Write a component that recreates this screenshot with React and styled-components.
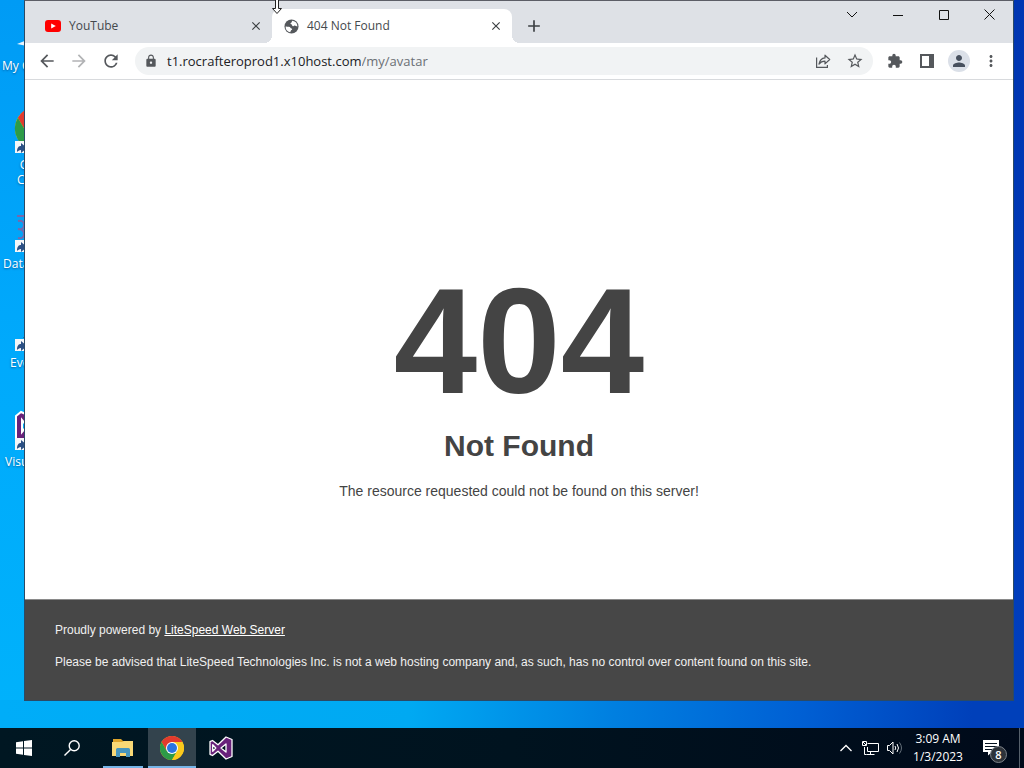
import React from "react";
import styled, { createGlobalStyle } from "styled-components";
import {
  MdAdd,
  MdArrowBack,
  MdArrowForward,
  MdClose,
  MdExtension,
  MdLock,
  MdMoreVert,
  MdPerson,
  MdRefresh,
  MdStarBorder,
} from "react-icons/md";

const uiFont = '"Open Sans", "Noto Sans", sans-serif';
const pageFont = '"Liberation Sans", Arial, sans-serif';

const GlobalStyle = createGlobalStyle`
  *, *::before, *::after { box-sizing: border-box; }
  body { margin: 0; font-family: ${uiFont}; font-size: 12px; }
  button { border: 0; padding: 0; background: none; font: inherit; color: inherit; }
  svg { display: block; flex: none; }
`;

const Screen = styled.div`
  display: flex;
  flex-direction: column;
  min-height: 100vh;
`;

const Desktop = styled.main`
  position: relative;
  display: flex;
  flex: 1;
  background:
    linear-gradient(90deg, #00adf8 0%, #00a9f2 40%, #007fe0 60%, #0060d4 78%, #0040ba 95%) bottom / 100% 28px no-repeat,
    linear-gradient(180deg, #009bf5 0%, #00aafc 50%, #00b2fb 100%) left / 50% 100% no-repeat,
    linear-gradient(180deg, #0036b2 0%, #003fbe 100%);
`;

/* Desktop shortcuts */
const Shortcuts = styled.nav`
  display: flex;
  flex-direction: column;
  width: 74px;
  margin-top: 6px;
`;

const Shortcut = styled.a`
  display: flex;
  flex-direction: column;
  align-items: center;
  height: 99px;
  color: #fff;
  font-size: 12px;
  line-height: 15px;
  text-decoration: none;
  text-shadow: 0 1px 2px rgba(0, 30, 80, 0.5);
`;

const ShortcutIcon = styled.svg`
  width: 48px;
  height: 48px;
  margin-bottom: 4px;
`;

const ShortcutLabel = styled.span`
  align-self: flex-start;
  margin-left: ${(p) => p.$inset}px;
  text-align: center;
  white-space: pre;
`;

/* Browser window */
const BrowserWindow = styled.section`
  position: absolute;
  top: 0;
  right: 10px;
  bottom: 27px;
  left: 24px;
  display: flex;
  flex-direction: column;
  border: 1px solid #2b4a66;
  border-top-color: #5c5e66;
  background: #fff;
`;

const TabStrip = styled.header`
  display: flex;
  height: 42px;
  background: #dee1e6;
  color: #45494d;
`;

const Tab = styled.div`
  position: relative;
  display: flex;
  align-items: center;
  width: ${(p) => (p.$active ? "240px" : "247px")};
  height: 34px;
  margin-top: 8px;
  padding: 0 8px 0 ${(p) => (p.$active ? "12px" : "20px")};
  border-radius: 8px 8px 0 0;
  background: ${(p) => (p.$active ? "#fff" : "transparent")};

  &::before,
  &::after {
    content: "";
    display: ${(p) => (p.$active ? "block" : "none")};
    position: absolute;
    bottom: 0;
    width: 8px;
    height: 8px;
  }
  &::before {
    left: -8px;
    background: radial-gradient(circle at 0 0, transparent 8px, #fff 8px);
  }
  &::after {
    right: -8px;
    background: radial-gradient(circle at 100% 0, transparent 8px, #fff 8px);
  }
`;

const TabTitle = styled.span`
  flex: 1;
  margin-left: 8px;
  line-height: 16px;
`;

const TabButton = styled.button`
  display: grid;
  place-items: center;
  width: 16px;
  height: 16px;
  color: #3c4043;
`;

const NewTab = styled(TabButton)`
  width: 28px;
  height: 28px;
  margin: 11px 0 0 8px;
`;

const WindowControls = styled.div`
  display: flex;
  margin-left: auto;
`;

const ControlButton = styled.button`
  display: grid;
  place-items: center;
  width: 46px;
  height: 28px;
  color: #111;
`;

const Toolbar = styled.div`
  display: flex;
  align-items: center;
  height: 37px;
  padding: 0 6px;
  border-bottom: 1px solid #d8dadd;
  background: #fff;
  color: #55585c;
`;

const ToolButton = styled.button`
  display: grid;
  place-items: center;
  width: 32px;
  height: 32px;
  opacity: ${(p) => (p.disabled ? 0.45 : 1)};
`;

const AddressBar = styled.form`
  display: flex;
  align-items: center;
  flex: 1;
  height: 28px;
  margin: 0 6px 0 8px;
  padding: 0 2px 0 9px;
  border-radius: 14px;
  background: #f1f3f4;
  font-size: 13px;
  line-height: 20px;
`;

const Host = styled.label`
  margin-left: 9px;
  color: #202124;
`;

const PathInput = styled.input`
  flex: 1;
  min-width: 0;
  padding: 0;
  border: 0;
  outline: 0;
  background: none;
  color: #6b6f74;
  font: inherit;
`;

const Avatar = styled.span`
  display: grid;
  place-items: center;
  width: 22px;
  height: 22px;
  border-radius: 50%;
  background: #dbe0e8;
  color: #47505e;
`;

/* Web page */
const Page = styled.article`
  display: flex;
  flex: 1;
  flex-direction: column;
  align-items: center;
  justify-content: center;
  padding-top: 87px;
  color: #444;
  font-family: ${pageFont};
  font-size: 14px;
  line-height: 20px;
`;

const Code = styled.h1`
  margin: 0;
  font-size: 150px;
  line-height: 150px;
`;

const Reason = styled.h2`
  margin: 20px 0 25px;
  font-size: 30px;
  line-height: 20px;
`;

const Message = styled.p`
  margin: 0;
`;

const PageFooter = styled.footer`
  display: flex;
  flex-direction: column;
  gap: 12px;
  height: 101px;
  padding: 20px 30px;
  border-top: 1px solid #8a8a8a;
  background: #474747;
  color: #f0f0f0;
  font-family: ${pageFont};
  font-size: 12px;
  line-height: 20px;
`;

const FooterLink = styled.a`
  color: #fff;
`;

const Cursor = styled.svg`
  position: absolute;
  top: 0;
  left: 270px;
`;

/* Taskbar */
const Taskbar = styled.footer`
  display: flex;
  height: 40px;
  background: linear-gradient(90deg, #001722, #00131f 50%, #000a1a);
  color: #fff;
`;

const TaskButton = styled.button`
  display: grid;
  place-items: center;
  width: 48px;
  height: 40px;
  margin-right: ${(p) => (p.$app ? "1px" : "0")};
  background: ${(p) => (p.$current ? "#33434d" : "transparent")};
  background-image: ${(p) => (p.$running ? "linear-gradient(#76b5e8, #76b5e8)" : "none")};
  background-position: bottom;
  background-repeat: no-repeat;
  background-size: ${(p) => (p.$current ? "48px" : "40px")} 2px;
`;

const Apps = styled.div`
  display: flex;
  margin-left: 3px;
`;

const Tray = styled.div`
  display: flex;
  align-items: center;
  margin-left: auto;
  padding-right: 4px;
`;

const TrayButton = styled.button`
  display: grid;
  place-items: center;
  width: 24px;
  height: 40px;
`;

const Clock = styled.time`
  width: 64px;
  line-height: 18px;
  text-align: center;
`;

const Notifications = styled.button`
  position: relative;
  display: grid;
  place-items: center;
  width: 50px;
  height: 40px;
  padding-right: 8px;
  border-right: 1px solid #56606b;
`;

const Count = styled.span`
  position: absolute;
  right: 12px;
  bottom: 5px;
  width: 17px;
  height: 17px;
  border: 1px solid #7d838a;
  border-radius: 50%;
  background: #2d333a;
  font-size: 11px;
  font-weight: 600;
  line-height: 15px;
  text-align: center;
`;

const ChromeMark = () => (
  <g>
    <circle cx="12" cy="12" r="12" fill="#fbc91d" />
    <path d="M12 6h10.400A12 12 0 0 0 1.600 6l5.200 9Z" fill="#e23a2e" />
    <path d="M1.600 6A12 12 0 0 0 12 24l5.200-9H6.800Z" fill="#2d9b47" />
    <path d="M12 24A12 12 0 0 0 22.400 6H12l5.200 9Z" fill="#fbc91d" />
    <circle cx="12" cy="12" r="6" fill="#fff" />
    <circle cx="12" cy="12" r="5" fill="#2b74e2" />
  </g>
);

const VisualStudioMark = () => (
  <path
    fillRule="evenodd"
    d="M17 1 23 3.500V20.500L17 23 9 15.200 3.500 19.500 1 18.300V5.700L3.500 4.500 9 8.800ZM17 8 12 12l5 4ZM3.700 8.700v6.600L6.800 12Z"
    fill="#68217a"
    stroke="#fff"
    strokeLinejoin="round"
    strokeWidth="1.300"
  />
);

const ShortcutArrow = () => (
  <g>
    <rect x="2" y="36" width="12" height="12" fill="#f4f6f8" />
    <path d="M4 47c0-5 2-6 4-6v-3l6 5-6 5v-3c-2 0-3 1-4 2Z" fill="#2b5085" />
  </g>
);

const desktopItems = [
  { name: "My Computer", inset: 2, art: <path d="M4 38 14 34v6Z" fill="#e8f4ff" /> },
  {
    name: "Google\nChrome",
    inset: 17,
    shortcut: true,
    art: <g transform="translate(2 2) scale(1.800)"><ChromeMark /></g>,
  },
  {
    name: "Database",
    inset: 3,
    shortcut: true,
    art: <path d="M4 12h38M5 17q6-1 6 4t-6 4q6 0 6 5t-6 4" fill="none" stroke="#7768ac" strokeWidth="2" />,
  },
  { name: "Everything", inset: 10, shortcut: true, art: <path d="M10 35 14 31v4Z" fill="#345" /> },
  {
    name: "Visual Studio",
    inset: 5,
    shortcut: true,
    art: <path d="M3 14 8 10l7 3 12-10 15 6v30l-15 6L3 37ZM9 18v12l5-6Z" fillRule="evenodd" fill="#68217a" stroke="#fff" strokeWidth="2" />,
  },
];

export default function App() {
  return (
    <>
      <GlobalStyle />
      <Screen>
        <Desktop>
          <Shortcuts aria-label="Desktop">
            {desktopItems.map((item) => (
              <Shortcut key={item.name} href="#">
                <ShortcutIcon viewBox="0 0 48 48" aria-hidden="true">
                  {item.art}
                  {item.shortcut && <ShortcutArrow />}
                </ShortcutIcon>
                <ShortcutLabel $inset={item.inset}>{item.name}</ShortcutLabel>
              </Shortcut>
            ))}
          </Shortcuts>

          <BrowserWindow>
            <TabStrip>
              <Tab>
                <svg width="16" height="16" viewBox="0 0 16 16" aria-hidden="true">
                  <rect y="2" width="16" height="12" rx="3" fill="#f00" />
                  <path d="M6.200 5.400v5.200L10.800 8Z" fill="#fff" />
                </svg>
                <TabTitle>YouTube</TabTitle>
                <TabButton aria-label="Close YouTube"><MdClose size={14} /></TabButton>
              </Tab>
              <Tab $active>
                <svg width="15" height="15" viewBox="0 0 16 16" aria-hidden="true">
                  <circle cx="8" cy="8" r="7.500" fill="#55585c" />
                  <path d="M9 1.800c-1 .8-.4 1.800-1.500 2.200-1 .4-.6 1.500.2 1.700 1.200.3.600 1.600 1.800 1.900 1.300.2 1.400-.8 2.500-.5l2.300.8A6.400 6.400 0 0 0 9 1.800ZM1.700 8c1.500.4 3.300-.2 4.500.6.900.6.700 1.400 1.800 1.600 1 .2.800 1.300 0 1.500-.9.300-.6 1.500-1.500 2.400A6.300 6.300 0 0 1 1.700 8Z" fill="#fff" />
                </svg>
                <TabTitle>404 Not Found</TabTitle>
                <TabButton aria-label="Close 404 Not Found"><MdClose size={14} /></TabButton>
              </Tab>
              <NewTab aria-label="New tab"><MdAdd size={20} /></NewTab>
              <WindowControls>
                <ControlButton aria-label="Search tabs">
                  <svg width="12" height="8" fill="none" stroke="currentColor"><path d="m1 1 5 5 5-5" /></svg>
                </ControlButton>
                <ControlButton aria-label="Minimize">
                  <svg width="10" height="10" fill="none" stroke="currentColor"><path d="M0 5.500h10" /></svg>
                </ControlButton>
                <ControlButton aria-label="Maximize">
                  <svg width="10" height="10" fill="none" stroke="currentColor"><path d="M.5.5h9v9h-9Z" /></svg>
                </ControlButton>
                <ControlButton aria-label="Close">
                  <svg width="12" height="12" fill="none" stroke="currentColor"><path d="m.5.5 10 10m0-10-10 10" /></svg>
                </ControlButton>
              </WindowControls>
            </TabStrip>

            <Toolbar>
              <ToolButton aria-label="Back"><MdArrowBack size={20} /></ToolButton>
              <ToolButton aria-label="Forward" disabled><MdArrowForward size={20} /></ToolButton>
              <ToolButton aria-label="Reload"><MdRefresh size={20} /></ToolButton>
              <AddressBar>
                <MdLock size={14} />
                <Host htmlFor="path">t1.rocrafteroprod1.x10host.com</Host>
                <PathInput id="path" defaultValue="/my/avatar" />
                <ToolButton type="button" aria-label="Share">
                  <svg width="16" height="16" viewBox="0 0 16 16" fill="none" stroke="currentColor" strokeWidth="1.200">
                    <path d="M1.600 4.500v9.900h10.800v-2.500" />
                    <path d="M10 2.200v2.700C6.200 5.200 4.600 7.600 4 11.200c1.600-2.300 3.300-3 6-3v2.700l4.700-4.400Z" strokeLinejoin="round" />
                  </svg>
                </ToolButton>
                <ToolButton type="button" aria-label="Bookmark"><MdStarBorder size={18} /></ToolButton>
              </AddressBar>
              <ToolButton aria-label="Extensions"><MdExtension size={16} /></ToolButton>
              <ToolButton aria-label="Side panel">
                <svg width="14" height="14" fill="currentColor">
                  <path fillRule="evenodd" d="M0 0h14v14H0ZM2 2v10h7V2Z" />
                </svg>
              </ToolButton>
              <ToolButton aria-label="Profile"><Avatar><MdPerson size={18} /></Avatar></ToolButton>
              <ToolButton aria-label="Menu"><MdMoreVert size={18} /></ToolButton>
            </Toolbar>

            <Page>
              <Code>404</Code>
              <Reason>Not Found</Reason>
              <Message>The resource requested could not be found on this server!</Message>
            </Page>
            <PageFooter>
              <Message>Proudly powered by <FooterLink href="#">LiteSpeed Web Server</FooterLink></Message>
              <Message>
                Please be advised that LiteSpeed Technologies Inc. is not a web hosting company and, as such, has no
                control over content found on this site.
              </Message>
            </PageFooter>
          </BrowserWindow>

          <Cursor width="14" height="15" viewBox="0 0 14 15" aria-hidden="true">
            <path d="M5.500-1v9.500h-3L7 13.500l4.500-5h-3V-1Z" fill="#fff" stroke="#222" />
          </Cursor>
        </Desktop>

        <Taskbar>
          <TaskButton aria-label="Start">
            <svg width="16" height="16" viewBox="0 0 16 16" fill="#fff">
              <path d="M0 2.300 7 1.300v6.200H0ZM8 1.100 16 0v7.500H8ZM0 8.500h7v6.200l-7-1ZM8 8.500h8V16l-8-1.100Z" />
            </svg>
          </TaskButton>
          <TaskButton aria-label="Search">
            <svg width="16" height="16" viewBox="0 0 16 16" fill="none" stroke="#fff" strokeWidth="1.400">
              <circle cx="10.200" cy="5.800" r="5" />
              <path d="M6.600 9.400.5 15.500" />
            </svg>
          </TaskButton>
          <Apps>
            <TaskButton $app $running aria-label="File Explorer">
              <svg width="22" height="20" viewBox="0 0 22 20">
                <path d="M1 1h8l2 2h10v5H1Z" fill="#dfa52b" />
                <path d="M0 4h10l2-1h9v15H0Z" fill="#f9d976" />
                <path d="M4 19v-7.500q0-1.500 1.500-1.500h11q1.500 0 1.500 1.500V19h-4v-4H8v4Z" fill="#4796bf" />
              </svg>
            </TaskButton>
            <TaskButton $app $running $current aria-label="Google Chrome">
              <svg width="24" height="24" viewBox="0 0 24 24"><ChromeMark /></svg>
            </TaskButton>
            <TaskButton $app aria-label="Visual Studio">
              <svg width="24" height="24" viewBox="0 0 24 24"><VisualStudioMark /></svg>
            </TaskButton>
          </Apps>
          <Tray>
            <TrayButton aria-label="Show hidden icons">
              <svg width="12" height="8" fill="none" stroke="#fff" strokeWidth="1.300"><path d="m.5 7 5.500-5.500L11.500 7" /></svg>
            </TrayButton>
            <TrayButton aria-label="Network">
              <svg width="17" height="14" fill="none" stroke="#fff">
                <path d="M5.500 2.500h11v8h-11V6M8.500 10.500v3m-4 0h8M2.500 6v7.500h2M.5.500h4v4h-4ZM1 1l3 3" />
              </svg>
            </TrayButton>
            <TrayButton aria-label="Volume">
              <svg width="17" height="14" viewBox="0 0 17 14" fill="none" stroke="#fff">
                <path d="M1.500 4.500h2l3.500-3.500v12L3.500 9.500h-2ZM9 5q1.500 2 0 4M11 3q3 4 0 8" />
                <path d="M13.500 1.500q4 5.500 0 11" stroke="#65707a" />
              </svg>
            </TrayButton>
            <Clock>3:09 AM<br />1/3/2023</Clock>
            <Notifications aria-label="8 new notifications">
              <svg width="16" height="16" viewBox="0 0 16 16">
                <path d="M0 0h16v12h-7l-4 3.500V12H0Z" fill="#fff" />
                <path d="M2 3.500h12M2 6.500h12M2 9.500h8" stroke="#061321" />
              </svg>
              <Count>8</Count>
            </Notifications>
          </Tray>
        </Taskbar>
      </Screen>
    </>
  );
}
